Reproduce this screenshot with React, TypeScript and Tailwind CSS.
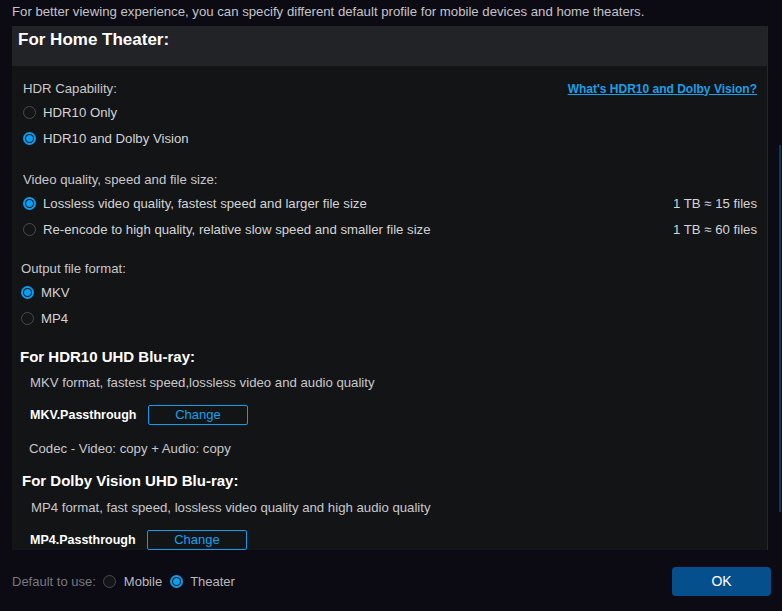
import React from 'react';

function Radio({ checked }: { checked: boolean }) {
  return checked ? (
    <span className="flex h-[13px] w-[13px] shrink-0 items-center justify-center rounded-full bg-[#0a9ef0]">
      <span className="flex h-[9px] w-[9px] items-center justify-center rounded-full bg-[#131416]">
        <span className="h-[7px] w-[7px] rounded-full bg-[#0a9ef0]" />
      </span>
    </span>
  ) : (
    <span className="block h-[13px] w-[13px] shrink-0 rounded-full border border-[#4a4b50] bg-[#141517]" />
  );
}

function Option({
  checked,
  label,
  right,
}: {
  checked: boolean;
  label: string;
  right?: string;
}) {
  return (
    <div className="flex h-[26px] items-center justify-between pt-[1px]">
      <div className="flex items-center gap-[7px]">
        <Radio checked={checked} />
        <span className="text-[#d4d4d6]">{label}</span>
      </div>
      {right && <span className="text-[#d4d4d6]">{right}</span>}
    </div>
  );
}

function ChangeButton() {
  return (
    <button className="flex h-[20px] w-[100px] items-center justify-center rounded-[2px] border border-[#0a9ef0] text-[13px] text-[#12a2ee]">
      Change
    </button>
  );
}

export default function App() {
  return (
    <div
      className="flex h-[611px] w-[782px] flex-col overflow-hidden bg-[#0c0b14] text-[13.2px]"
      style={{ fontFamily: '"Liberation Sans", Arial, sans-serif' }}
    >
      {/* Intro */}
      <div className="flex h-[24px] items-center pl-3 text-[#c4c4c8]">
        For better viewing experience, you can specify different default profile for mobile devices and home theaters.
      </div>

      <div className="mt-[2px] flex">
        {/* Panel */}
        <div className="ml-3 flex h-[524px] w-[756px] shrink-0 flex-col overflow-hidden border-r border-[#26262e] bg-[#131416]">
          <div className="h-[40px] shrink-0 bg-[#222327] pl-[6px] pt-[4px]">
            <h2 className="flex h-[20px] items-center text-[17px] font-bold text-white">For Home Theater:</h2>
          </div>

          <div className="flex flex-col pr-[10px]">
            {/* HDR */}
            <div className="mt-[11px] pl-[11px]">
              <div className="flex h-[22px] items-center justify-between pt-[1px]">
                <span className="text-[#c8c8cc]">HDR Capability:</span>
                <a className="text-[12px] font-bold text-[#1a9fe8] underline">What's HDR10 and Dolby Vision?</a>
              </div>
              <Option checked={false} label="HDR10 Only" />
              <Option checked label="HDR10 and Dolby Vision" />
            </div>

            {/* Quality */}
            <div className="mt-[17px] pl-[11px]">
              <div className="flex h-[22px] items-center pt-[1px] text-[#c8c8cc]">Video quality, speed and file size:</div>
              <Option checked label="Lossless video quality, fastest speed and larger file size" right="1 TB ≈ 15 files" />
              <Option checked={false} label="Re-encode to high quality, relative slow speed and smaller file size" right="1 TB ≈ 60 files" />
            </div>

            {/* Output */}
            <div className="mt-[15px] pl-[9px]">
              <div className="flex h-[22px] items-center pt-[1px] text-[#c8c8cc]">Output file format:</div>
              <Option checked label="MKV" />
              <Option checked={false} label="MP4" />
            </div>

            {/* HDR10 UHD */}
            <div className="mt-[14px]">
              <h3 className="flex h-[24px] items-center pl-[8px] pt-[1px] text-[15px] font-bold text-white">For HDR10 UHD Blu-ray:</h3>
              <div className="flex h-[26px] items-center pl-[18px] pt-[1px] text-[#c8c8cc]">MKV format, fastest speed,lossless video and audio quality</div>
              <div className="mt-[7px] flex h-[26px] items-center gap-3 pl-[18px]">
                <span className="w-[106px] text-[12.5px] font-bold text-white">MKV.Passthrough</span>
                <ChangeButton />
              </div>
              <div className="mt-[7px] flex h-[26px] items-center pl-[17px] pt-[1px] text-[#c8c8cc]">Codec - Video: copy + Audio: copy</div>
            </div>

            {/* Dolby Vision */}
            <div className="mt-[8px]">
              <h3 className="flex h-[24px] items-center pl-[10px] pt-[1px] text-[15px] font-bold text-white">For Dolby Vision UHD Blu-ray:</h3>
              <div className="mt-[1px] flex h-[26px] items-center pl-[19px] pt-[1px] text-[#c8c8cc]">MP4 format, fast speed, lossless video quality and high audio quality</div>
              <div className="mt-[7px] flex h-[26px] items-center gap-3 pl-[18px]">
                <span className="w-[105px] text-[12.5px] font-bold text-white">MP4.Passthrough</span>
                <ChangeButton />
              </div>
            </div>
          </div>
        </div>

        {/* background strip */}
        <div className="ml-[11px] mt-[119px] h-[367px] w-[2px] bg-[#0c3a5e]" />
      </div>

      {/* Footer */}
      <div className="mt-[17px] flex h-[29px] items-center justify-between pl-3 pr-[11px] text-[13px]">
        <div className="flex items-center">
          <span className="text-[#77777e]">Default to use:</span>
          <span className="ml-[7px] flex"><Radio checked={false} /></span>
          <span className="ml-[8px] text-[#b8b8bc]">Mobile</span>
          <span className="ml-[8px] flex"><Radio checked /></span>
          <span className="ml-[7px] text-[#b8b8bc]">Theater</span>
        </div>
        <button className="flex h-[29px] w-[99px] items-center justify-center rounded-[4px] bg-[#054f8c] text-[14px] text-white">
          OK
        </button>
      </div>
    </div>
  );
}
